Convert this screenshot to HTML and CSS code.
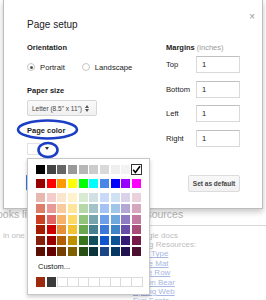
FILE: index.html
```html
<!DOCTYPE html>
<html>
<head>
<meta charset="utf-8">
<link rel="stylesheet" href="styles.css">
</head>
<body>
<div class="page">
  <div class="bg-left">
    <div class="bg-h">ooks like</div>
    <div class="bg-t">in one</div>
  </div>
  <div class="bg-right">
    <div class="bg-h bg-h-line">Resources</div>
    <div class="bg-t">Google docs</div>
    <div class="bg-t">Using Resources:</div>
    <a class="bg-a">Font Type</a>
    <a class="bg-a">Place Mat</a>
    <a class="bg-a">Table Row</a>
    <a class="bg-a">Brown Bear</a>
    <a class="bg-a">Spring Web</a>
    <a class="bg-a">Fun Fonts</a>
  </div>
</div>

<div class="dialog">
  <div class="dlg-head">
    <div class="dlg-title">Page setup</div>
    <div class="dlg-close">×</div>
  </div>
  <div class="dlg-body">
    <div class="col-left">
      <div class="lbl">Orientation</div>
      <div class="radios">
        <span class="radio"><span class="rb on"></span>Portrait</span>
        <span class="radio"><span class="rb"></span>Landscape</span>
      </div>
      <div class="lbl lbl-paper">Paper size</div>
      <div class="select">Letter (8.5" x 11")
        <svg class="updown" width="4" height="7" viewBox="0 0 4 7"><path d="M0 3 L2 0 L4 3 Z M0 4 L2 7 L4 4 Z" fill="#555"/></svg>
      </div>
      <div class="lbl lbl-color">Page color</div>
      <div class="colorbtn"><span class="swatch"></span><span class="caret"></span></div>
      <div class="btns"><span class="btn-ok">OK</span></div>
    </div>
    <div class="col-right">
      <div class="lbl">Margins <span class="muted">(inches)</span></div>
      <div class="margins">
        <div class="mrow"><span class="mlabel">Top</span><span class="inp">1</span></div>
        <div class="mrow"><span class="mlabel">Bottom</span><span class="inp">1</span></div>
        <div class="mrow"><span class="mlabel">Left</span><span class="inp">1</span></div>
        <div class="mrow"><span class="mlabel">Right</span><span class="inp">1</span></div>
      </div>
      <div class="btn-default">Set as default</div>
    </div>
  </div>
</div>

<div class="palette">
  <div class="pgrid">
    <span class="cell" style="background:#000000"></span>
    <span class="cell" style="background:#434343"></span>
    <span class="cell" style="background:#666666"></span>
    <span class="cell" style="background:#999999"></span>
    <span class="cell" style="background:#b7b7b7"></span>
    <span class="cell" style="background:#cccccc"></span>
    <span class="cell" style="background:#d9d9d9"></span>
    <span class="cell" style="background:#efefef"></span>
    <span class="cell" style="background:#f3f3f3"></span>
    <span class="cell sel"><svg width="9" height="9" viewBox="0 0 9 9"><path d="M1.2 4.8 L3.4 7.4 L8 1.2" fill="none" stroke="#000" stroke-width="1.6"/></svg></span>
  </div>
  <div class="pgrid prow2">
    <span class="cell" style="background:#980000"></span>
    <span class="cell" style="background:#ff0000"></span>
    <span class="cell" style="background:#ff9900"></span>
    <span class="cell" style="background:#ffff00"></span>
    <span class="cell" style="background:#00ff00"></span>
    <span class="cell" style="background:#00ffff"></span>
    <span class="cell" style="background:#4a86e8"></span>
    <span class="cell" style="background:#0000ff"></span>
    <span class="cell" style="background:#9900ff"></span>
    <span class="cell" style="background:#ff00ff"></span>
  </div>
  <div class="pgrid ptints">
    <span class="cell" style="background:#e6b8af"></span>
    <span class="cell" style="background:#f4cccc"></span>
    <span class="cell" style="background:#fce5cd"></span>
    <span class="cell" style="background:#fff2cc"></span>
    <span class="cell" style="background:#d9ead3"></span>
    <span class="cell" style="background:#d0e0e3"></span>
    <span class="cell" style="background:#c9daf8"></span>
    <span class="cell" style="background:#cfe2f3"></span>
    <span class="cell" style="background:#d9d2e9"></span>
    <span class="cell" style="background:#ead1dc"></span>
    <span class="cell" style="background:#dd7e6b"></span>
    <span class="cell" style="background:#ea9999"></span>
    <span class="cell" style="background:#f9cb9c"></span>
    <span class="cell" style="background:#ffe599"></span>
    <span class="cell" style="background:#b6d7a8"></span>
    <span class="cell" style="background:#a2c4c9"></span>
    <span class="cell" style="background:#a4c2f4"></span>
    <span class="cell" style="background:#9fc5e8"></span>
    <span class="cell" style="background:#b4a7d6"></span>
    <span class="cell" style="background:#d5a6bd"></span>
    <span class="cell" style="background:#cc4125"></span>
    <span class="cell" style="background:#e06666"></span>
    <span class="cell" style="background:#f6b26b"></span>
    <span class="cell" style="background:#ffd966"></span>
    <span class="cell" style="background:#93c47d"></span>
    <span class="cell" style="background:#76a5af"></span>
    <span class="cell" style="background:#6d9eeb"></span>
    <span class="cell" style="background:#6fa8dc"></span>
    <span class="cell" style="background:#8e7cc3"></span>
    <span class="cell" style="background:#c27ba0"></span>
    <span class="cell" style="background:#a61c00"></span>
    <span class="cell" style="background:#cc0000"></span>
    <span class="cell" style="background:#e69138"></span>
    <span class="cell" style="background:#f1c232"></span>
    <span class="cell" style="background:#6aa84f"></span>
    <span class="cell" style="background:#45818e"></span>
    <span class="cell" style="background:#3c78d8"></span>
    <span class="cell" style="background:#3d85c6"></span>
    <span class="cell" style="background:#674ea7"></span>
    <span class="cell" style="background:#a64d79"></span>
    <span class="cell" style="background:#85200c"></span>
    <span class="cell" style="background:#990000"></span>
    <span class="cell" style="background:#b45f06"></span>
    <span class="cell" style="background:#bf9000"></span>
    <span class="cell" style="background:#38761d"></span>
    <span class="cell" style="background:#134f5c"></span>
    <span class="cell" style="background:#1155cc"></span>
    <span class="cell" style="background:#0b5394"></span>
    <span class="cell" style="background:#351c75"></span>
    <span class="cell" style="background:#741b47"></span>
    <span class="cell" style="background:#5b0f00"></span>
    <span class="cell" style="background:#660000"></span>
    <span class="cell" style="background:#783f04"></span>
    <span class="cell" style="background:#7f6000"></span>
    <span class="cell" style="background:#274e13"></span>
    <span class="cell" style="background:#0c343d"></span>
    <span class="cell" style="background:#1c4587"></span>
    <span class="cell" style="background:#073763"></span>
    <span class="cell" style="background:#20124d"></span>
    <span class="cell" style="background:#4c1130"></span>
  </div>
  <div class="custom">Custom...</div>
  <div class="crow">
    <span class="ccell" style="background:#9c2a0e"></span>
    <span class="ccell" style="background:#3a3a3a"></span>
    <span class="ccell empty first"></span>
    <span class="ccell empty"></span>
    <span class="ccell empty"></span>
    <span class="ccell empty"></span>
    <span class="ccell empty"></span>
    <span class="ccell empty"></span>
    <span class="ccell empty"></span>
    <span class="ccell empty"></span>
  </div>
</div>

<svg class="annot" width="266" height="300" viewBox="0 0 266 300">
  <ellipse cx="47.5" cy="129.5" rx="29.5" ry="9" fill="none" stroke="#1c3ec4" stroke-width="2.6"/>
  <ellipse cx="48" cy="150" rx="9.5" ry="7" fill="none" stroke="#1c3ec4" stroke-width="2.6"/>
</svg>
</body>
</html>
```
FILE: styles.css
```css
body {
  margin: 0;
  width: 266px;
  height: 300px;
  overflow: hidden;
  position: relative;
  background: #fff;
  font-family: "Liberation Sans", Arial, sans-serif;
  color: #222;
}

/* background page (behind the modal) */
.page {
  display: grid;
  grid-template-columns: 133px 1fr;
  padding-top: 208px;
}
.bg-h {
  font-size: 10.5px;
  line-height: 13px;
  color: #b4b4b4;
  white-space: nowrap;
}
.bg-left .bg-h { margin-left: -3px; }
.bg-h-line {
  border-bottom: 1px solid #d8d8d8;
  padding-bottom: 4px;
}
.bg-t, .bg-a {
  display: block;
  font-size: 8px;
  line-height: 9.4px;
  color: #bcbcbc;
  white-space: nowrap;
}
.bg-left .bg-t { margin-top: 9.5px; margin-left: 3px; }
.bg-h-line + .bg-t { margin-top: 4.5px; }
.bg-a {
  color: #a8b8e4;
  text-decoration: underline;
}

/* dialog */
.dialog {
  position: absolute;
  left: 3px;
  top: -1px;
  width: 260px;
  height: 210px;
  box-sizing: border-box;
  border: 1px solid #bdbdbd;
  background: #fff;
  box-shadow: 0 3px 6px rgba(0, 0, 0, 0.22);
  padding: 19px 0 0 23px;
}
.dlg-head {
  display: flex;
  justify-content: space-between;
  align-items: flex-start;
  padding-right: 7px;
}
.dlg-title {
  font-size: 10px;
  line-height: 12px;
  color: #222;
}
.dlg-close {
  font-size: 10px;
  line-height: 8px;
  color: #9a9a9a;
  margin-top: -6px;
}
.dlg-body {
  display: flex;
  margin-top: 11.5px;
}
.col-left { width: 139px; }
.col-right { flex: 1; }

.lbl {
  font-weight: bold;
  font-size: 7.5px;
  line-height: 9px;
  color: #222;
  white-space: nowrap;
}
.muted { font-weight: normal; color: #9a9a9a; }

.radios {
  display: flex;
  align-items: center;
  height: 10px;
  margin-top: 10.5px;
  font-size: 7.7px;
  color: #222;
}
.radio {
  display: flex;
  align-items: center;
  gap: 5px;
}
.radio + .radio { margin-left: 17px; }
.rb {
  width: 8px;
  height: 8px;
  box-sizing: border-box;
  border: 1px solid #c6c6c6;
  border-radius: 50%;
  background: #fff;
  display: flex;
  align-items: center;
  justify-content: center;
}
.rb.on::after {
  content: "";
  width: 3px;
  height: 3px;
  border-radius: 50%;
  background: #555;
}

.lbl-paper { margin-top: 13.5px; }
.select {
  margin-top: 5.5px;
  width: 70px;
  height: 16px;
  box-sizing: border-box;
  border: 1px solid #d6d6d6;
  border-radius: 2px;
  background: linear-gradient(#fafafa, #f0f0f0);
  display: flex;
  align-items: center;
  gap: 3px;
  padding-left: 4px;
  font-size: 6.5px;
  color: #444;
  white-space: nowrap;
}
.lbl-color { margin-top: 9.5px; }
.colorbtn {
  margin-top: 6.5px;
  height: 15px;
  display: flex;
  align-items: center;
  gap: 5px;
}
.swatch {
  width: 13px;
  height: 12px;
  box-sizing: border-box;
  border: 1px solid #e2e2e2;
  background: #fff;
}
.caret {
  width: 0;
  height: 0;
  border-left: 2.5px solid transparent;
  border-right: 2.5px solid transparent;
  border-top: 3px solid #333;
}
.btns {
  margin-top: 18px;
  display: flex;
}
.btn-ok {
  margin-left: -1px;
  width: 34px;
  height: 17px;
  box-sizing: border-box;
  background: #4d90fe;
  border: 1px solid #3079ed;
  border-radius: 2px;
  color: #fff;
  font-size: 7px;
  font-weight: bold;
  display: flex;
  align-items: center;
  justify-content: center;
}

.margins {
  margin-top: 4.5px;
  display: flex;
  flex-direction: column;
  gap: 7.5px;
}
.mrow {
  display: flex;
  align-items: center;
  height: 17px;
  font-size: 7.6px;
  color: #222;
}
.mlabel { width: 30px; }
.inp {
  width: 44px;
  height: 17px;
  box-sizing: border-box;
  border: 1px solid #d9d9d9;
  border-top-color: #c0c0c0;
  padding-left: 5px;
  display: flex;
  align-items: center;
}
.btn-default {
  margin: 28.5px 0 0 22px;
  width: 52px;
  height: 17px;
  box-sizing: border-box;
  border: 1px solid #dcdcdc;
  border-radius: 2px;
  background: linear-gradient(#f8f8f8, #f1f1f1);
  font-weight: bold;
  font-size: 6.5px;
  color: #444;
  display: flex;
  align-items: center;
  justify-content: center;
  white-space: nowrap;
}

/* colour palette menu */
.palette {
  position: absolute;
  left: 27px;
  top: 158px;
  width: 123px;
  height: 137px;
  box-sizing: border-box;
  border: 1px solid #c8c8c8;
  background: #fff;
  box-shadow: 0 2px 4px rgba(0, 0, 0, 0.2);
  padding: 6px 0 0 8px;
}
.pgrid {
  display: grid;
  grid-template-columns: repeat(10, 9px);
  grid-auto-rows: 9px;
  column-gap: 1.67px;
  row-gap: 1.8px;
}
.prow2, .ptints { margin-top: 5px; }
.cell { display: block; }
.cell.sel {
  margin: -1px;
  border: 1px solid #333;
  background: #fff;
  display: flex;
  align-items: center;
  justify-content: center;
}
.custom {
  margin-top: 6px;
  padding-left: 2px;
  font-size: 7.5px;
  line-height: 10px;
  color: #222;
}
.crow {
  margin-top: 5px;
  display: grid;
  grid-template-columns: repeat(10, 10.67px);
  height: 10px;
}
.ccell {
  display: block;
  width: 9px;
  height: 10px;
}
.ccell.empty {
  width: 10.67px;
  box-sizing: border-box;
  border: 1px solid #dadada;
  border-left: none;
  background: #fff;
}
.ccell.empty.first {
  border-left: 1px solid #dadada;
}

.annot {
  position: absolute;
  left: 0;
  top: 0;
  pointer-events: none;
}
```
